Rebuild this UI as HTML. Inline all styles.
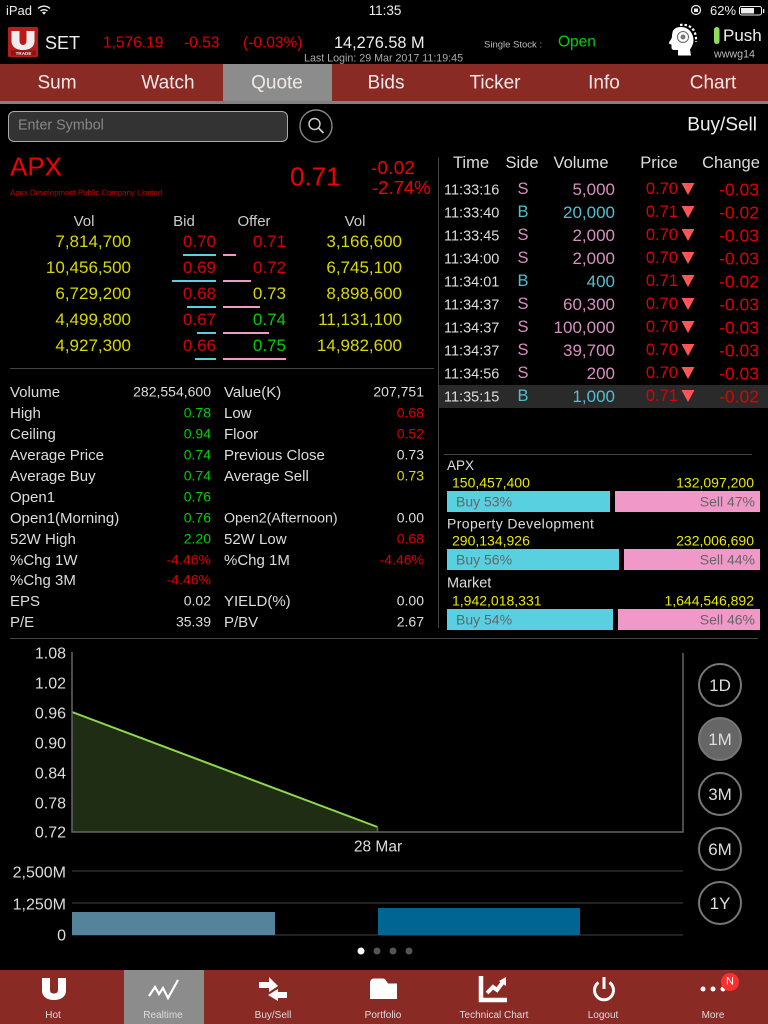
<!DOCTYPE html>
<html><head><meta charset="utf-8"><title>Quote</title>
<style>
html,body{margin:0;padding:0;background:#000}
#p{position:relative;width:768px;height:1024px;overflow:hidden;background:#000;font-family:"Liberation Sans",sans-serif;color:#ddd}
.t{position:absolute;transform:translateY(calc(-50% + 1px));white-space:nowrap;line-height:1.2}
.c{transform:translate(-50%,calc(-50% + 1px))}
.b{position:absolute}
.tab{font-size:19px;color:#f0e8e8}
.vh{font-size:15px;color:#ccc}
.q{font-size:17px}
.y{color:#d8d800}.r{color:#d80000}.g{color:#00d000}
.s{font-size:15px;color:#ddd}
.v{font-size:14px}
.w{color:#ddd}
.th{font-size:16.5px;color:#ddd}
.tm{font-size:14.5px;color:#ddd;left:444px}
.sd{font-size:16.5px;left:523px}
.vo{font-size:17px;right:153px}
.pr{font-size:16.5px;right:90px;color:#e00000}
.ch{font-size:17.5px;right:9px;color:#e00000}
.pk{color:#d890c0}.cy{color:#50c0d0}
.n{font-size:14px;color:#e8e800}
.l{font-size:14.5px;color:#ddd;left:447px}
.bs{font-size:14px;color:#666}
.ax{font-size:16px;color:#ddd;right:702px}
.rb{position:absolute;left:698px;width:40px;height:40px;border:2px solid #777;border-radius:50%;text-align:center;line-height:42px;font-size:17px;color:#ddd}
.f{font-size:10px;color:#ddd}
</style></head><body><div id="p">

<!-- status bar -->
<div class="t" style="left:6px;top:10px;font-size:13px;color:#eee">iPad</div>
<div class="t c" style="left:385px;top:10px;font-size:13.5px;color:#eee">11:35</div>
<div class="t" style="left:710px;top:10px;font-size:13px;color:#eee">62%</div>
<svg class="b" style="left:0;top:0" width="768" height="64" viewBox="0 0 768 64">
<g fill="none" stroke="#eee" stroke-width="1.4"><path d="M38 8.5a9 9 0 0 1 12 0"/><path d="M40.5 11a5.4 5.4 0 0 1 7 0"/></g><path d="M42 12.5a3 3 0 0 1 4 0l-2 2.2z" fill="#eee"/>
<circle cx="696" cy="10" r="4.5" fill="none" stroke="#eee" stroke-width="1.2"/><rect x="694" y="8.5" width="4" height="3.5" fill="#eee"/>
<rect x="739.5" y="6.5" width="22" height="8.5" rx="2" fill="none" stroke="#eee"/><rect x="741" y="8" width="13" height="5.5" fill="#eee"/><rect x="763" y="9" width="1.3" height="4" fill="#eee"/>
<!-- logo -->
<rect x="8" y="27" width="30" height="30" rx="1.5" fill="#b81d1d"/>
<path d="M11.500 31h8v9.500c0 3 1.500 4.500 3.500 4.500s3.500-1.500 3.500-4.500V31h8v10c0 6-5 9-11.500 9s-11.500-3-11.500-9z" fill="#eee"/>
<rect x="11" y="50.500" width="25" height="5" fill="#8c1414"/>
<text x="23.500" y="55" text-anchor="middle" font-family="Liberation Sans" font-size="4.600" font-weight="bold" fill="#eee">TRADE</text>
<!-- head -->
<path d="M681 27c-5 0-8 2-8.500 5.500-.5 2-.5 4-.7 5 0 1.500-2.800 4-2.800 5.500 0 1 1.500 1.500 2.500 1.500v3c0 1.500 1 2.500 3 2.500h3.500v5.500h13l-1-6c2-3 3.500-6 3.500-9 0-8-5.500-13.500-12.500-13.500z" fill="#fff"/>
<circle cx="683" cy="37" r="5.500" fill="none" stroke="#666" stroke-width="1"/><circle cx="683" cy="37" r="2.500" fill="#777"/>
<path d="M680 25c9-1.500 17 4 16 17" fill="none" stroke="#fff" stroke-width="2.200" stroke-dasharray="2.500 2"/>
<rect x="714" y="27" width="5.500" height="17" rx="2.700" fill="#90dc60"/>
</svg>

<div class="t" style="left:45px;top:43px;font-size:18px;color:#eee">SET</div>
<div class="t" style="left:103px;top:43px;font-size:15.5px;color:#e00000">1,576.19</div>
<div class="t" style="left:184px;top:43px;font-size:15.5px;color:#e00000">-0.53</div>
<div class="t" style="left:243px;top:43px;font-size:15.5px;color:#e00000">(-0.03%)</div>
<div class="t" style="left:334px;top:43px;font-size:16.3px;color:#eee">14,276.58 M</div>
<div class="t" style="left:304px;top:58px;font-size:10.7px;color:#aaa">Last Login: 29 Mar 2017 11:19:45</div>
<div class="t" style="left:484px;top:44px;font-size:9.5px;color:#bbb">Single Stock :</div>
<div class="t" style="left:558px;top:42px;font-size:15.5px;color:#00d000">Open</div>
<div class="t" style="left:723px;top:35px;font-size:17px;color:#eee">Push</div>
<div class="t" style="left:714px;top:54px;font-size:10.7px;color:#bbb">wwwg14</div>

<!-- tabs -->
<div class="b" style="left:0;top:64px;width:768px;height:37px;background:#8a2a25"></div>
<div class="b" style="left:223px;top:64px;width:109px;height:37px;background:#8c8c8c"></div>
<div class="b" style="left:0;top:101px;width:768px;height:3px;background:#808080"></div>
<div class="t c tab" style="left:57px;top:83px">Sum</div>
<div class="t c tab" style="left:168px;top:83px">Watch</div>
<div class="t c tab" style="left:277px;top:83px">Quote</div>
<div class="t c tab" style="left:386px;top:83px">Bids</div>
<div class="t c tab" style="left:495px;top:83px">Ticker</div>
<div class="t c tab" style="left:604px;top:83px">Info</div>
<div class="t c tab" style="left:713px;top:83px">Chart</div>

<!-- search -->
<div class="b" style="left:8px;top:111px;width:278px;height:29px;background:#333;border:1px solid #aaa;border-radius:6px"></div>
<div class="t" style="left:18px;top:125px;font-size:14.3px;color:#888">Enter Symbol</div>
<svg class="b" style="left:299px;top:109px" width="34" height="34"><circle cx="17" cy="17" r="16" fill="none" stroke="#888" stroke-width="1.4"/><circle cx="15.500" cy="15" r="5.500" fill="none" stroke="#ccc" stroke-width="1.5"/><path d="M19.500 19l5 5" stroke="#ccc" stroke-width="1.8"/></svg>
<div class="t" style="right:11px;top:125px;font-size:19px;color:#eee">Buy/Sell</div>

<!-- title -->
<div class="t" style="left:10px;top:166px;font-size:26px;color:#f00000">APX</div>
<div class="t" style="left:10px;top:192px;font-size:7.8px;color:#c00000">Apex Development Public Company Limited</div>
<div class="t" style="left:290px;top:176px;font-size:26px;color:#f00000">0.71</div>
<div class="t" style="left:371px;top:167px;font-size:18.5px;letter-spacing:.4px;color:#f00000">-0.02</div>
<div class="t" style="left:372px;top:187px;font-size:18.5px;color:#f00000">-2.74%</div>

<!-- bids -->
<div class="t c vh" style="left:84px;top:221px">Vol</div>
<div class="t c vh" style="left:184px;top:221px">Bid</div>
<div class="t c vh" style="left:254px;top:221px">Offer</div>
<div class="t c vh" style="left:355px;top:221px">Vol</div>

<div class="t q y" style="right:637px;top:241px">7,814,700</div><div class="t q r" style="right:552px;top:241px">0.70</div><div class="t q r" style="right:482px;top:241px">0.71</div><div class="t q y" style="right:366px;top:241px">3,166,600</div>
<div class="t q y" style="right:637px;top:267px">10,456,500</div><div class="t q r" style="right:552px;top:267px">0.69</div><div class="t q r" style="right:482px;top:267px">0.72</div><div class="t q y" style="right:366px;top:267px">6,745,100</div>
<div class="t q y" style="right:637px;top:293px">6,729,200</div><div class="t q r" style="right:552px;top:293px">0.68</div><div class="t q y" style="right:482px;top:293px">0.73</div><div class="t q y" style="right:366px;top:293px">8,898,600</div>
<div class="t q y" style="right:637px;top:319px">4,499,800</div><div class="t q r" style="right:552px;top:319px">0.67</div><div class="t q g" style="right:482px;top:319px">0.74</div><div class="t q y" style="right:366px;top:319px">11,131,100</div>
<div class="t q y" style="right:637px;top:345px">4,927,300</div><div class="t q r" style="right:552px;top:345px">0.66</div><div class="t q g" style="right:482px;top:345px">0.75</div><div class="t q y" style="right:366px;top:345px">14,982,600</div>

<div class="b" style="left:183px;top:254px;width:33px;height:2px;background:#5ad0e0"></div>
<div class="b" style="left:172px;top:280px;width:44px;height:2px;background:#5ad0e0"></div>
<div class="b" style="left:187px;top:306px;width:29px;height:2px;background:#5ad0e0"></div>
<div class="b" style="left:197px;top:332px;width:19px;height:2px;background:#5ad0e0"></div>
<div class="b" style="left:195px;top:358px;width:21px;height:2px;background:#5ad0e0"></div>
<div class="b" style="left:223px;top:254px;width:13px;height:2px;background:#f098c8"></div>
<div class="b" style="left:223px;top:280px;width:28px;height:2px;background:#f098c8"></div>
<div class="b" style="left:223px;top:306px;width:37px;height:2px;background:#f098c8"></div>
<div class="b" style="left:223px;top:332px;width:46px;height:2px;background:#f098c8"></div>
<div class="b" style="left:223px;top:358px;width:63px;height:2px;background:#f098c8"></div>

<div class="b" style="left:10px;top:368px;width:424px;height:1px;background:#444"></div>
<div class="b" style="left:438px;top:157px;width:1px;height:471px;background:#444"></div>

<!-- stats -->
<div class="t s" style="left:10px;top:392px">Volume</div><div class="t v w" style="right:557px;top:391px">282,554,600</div><div class="t s" style="left:224px;top:392px">Value(K)</div><div class="t v w" style="right:344px;top:391px">207,751</div>
<div class="t s" style="left:10px;top:413px">High</div><div class="t v g" style="right:557px;top:412px">0.78</div><div class="t s" style="left:224px;top:413px">Low</div><div class="t v r" style="right:344px;top:412px">0.68</div>
<div class="t s" style="left:10px;top:434px">Ceiling</div><div class="t v g" style="right:557px;top:433px">0.94</div><div class="t s" style="left:224px;top:434px">Floor</div><div class="t v r" style="right:344px;top:433px">0.52</div>
<div class="t s" style="left:10px;top:455px">Average Price</div><div class="t v g" style="right:557px;top:454px">0.74</div><div class="t s" style="left:224px;top:455px">Previous Close</div><div class="t v w" style="right:344px;top:454px">0.73</div>
<div class="t s" style="left:10px;top:476px">Average Buy</div><div class="t v g" style="right:557px;top:475px">0.74</div><div class="t s" style="left:224px;top:476px">Average Sell</div><div class="t v y" style="right:344px;top:475px">0.73</div>
<div class="t s" style="left:10px;top:497px">Open1</div><div class="t v g" style="right:557px;top:496px">0.76</div>
<div class="t s" style="left:10px;top:518px">Open1(Morning)</div><div class="t v g" style="right:557px;top:517px">0.76</div><div class="t s" style="left:224px;top:518px;font-size:14.2px">Open2(Afternoon)</div><div class="t v w" style="right:344px;top:517px">0.00</div>
<div class="t s" style="left:10px;top:539px">52W High</div><div class="t v g" style="right:557px;top:538px">2.20</div><div class="t s" style="left:224px;top:539px">52W Low</div><div class="t v r" style="right:344px;top:538px">0.68</div>
<div class="t s" style="left:10px;top:560px">%Chg 1W</div><div class="t v r" style="right:557px;top:559px">-4.46%</div><div class="t s" style="left:224px;top:560px">%Chg 1M</div><div class="t v r" style="right:344px;top:559px">-4.46%</div>
<div class="t s" style="left:10px;top:580px">%Chg 3M</div><div class="t v r" style="right:557px;top:579px">-4.46%</div>
<div class="t s" style="left:10px;top:601px">EPS</div><div class="t v w" style="right:557px;top:600px">0.02</div><div class="t s" style="left:224px;top:601px">YIELD(%)</div><div class="t v w" style="right:344px;top:600px">0.00</div>
<div class="t s" style="left:10px;top:622px">P/E</div><div class="t v w" style="right:557px;top:621px">35.39</div><div class="t s" style="left:224px;top:622px">P/BV</div><div class="t v w" style="right:344px;top:621px">2.67</div>

<div class="b" style="left:10px;top:638px;width:748px;height:1px;background:#444"></div>

<!-- ticker -->
<div class="t c th" style="left:471px;top:163px">Time</div>
<div class="t c th" style="left:522px;top:163px">Side</div>
<div class="t c th" style="left:581px;top:163px">Volume</div>
<div class="t c th" style="left:659px;top:163px">Price</div>
<div class="t c th" style="left:731px;top:163px">Change</div>
<div class="b" style="left:439px;top:385px;width:329px;height:23px;background:#2a2a2a"></div>

<div class="t tm" style="top:190px">11:33:16</div><div class="t c sd pk" style="top:189px">S</div><div class="t vo pk" style="top:189px">5,000</div><div class="t pr" style="top:189px">0.70</div><div class="t ch" style="top:189px">-0.03</div>
<div class="t tm" style="top:213px">11:33:40</div><div class="t c sd cy" style="top:212px">B</div><div class="t vo cy" style="top:212px">20,000</div><div class="t pr" style="top:212px">0.71</div><div class="t ch" style="top:212px">-0.02</div>
<div class="t tm" style="top:236px">11:33:45</div><div class="t c sd pk" style="top:235px">S</div><div class="t vo pk" style="top:235px">2,000</div><div class="t pr" style="top:235px">0.70</div><div class="t ch" style="top:235px">-0.03</div>
<div class="t tm" style="top:259px">11:34:00</div><div class="t c sd pk" style="top:258px">S</div><div class="t vo pk" style="top:258px">2,000</div><div class="t pr" style="top:258px">0.70</div><div class="t ch" style="top:258px">-0.03</div>
<div class="t tm" style="top:282px">11:34:01</div><div class="t c sd cy" style="top:281px">B</div><div class="t vo cy" style="top:281px">400</div><div class="t pr" style="top:281px">0.71</div><div class="t ch" style="top:281px">-0.02</div>
<div class="t tm" style="top:305px">11:34:37</div><div class="t c sd pk" style="top:304px">S</div><div class="t vo pk" style="top:304px">60,300</div><div class="t pr" style="top:304px">0.70</div><div class="t ch" style="top:304px">-0.03</div>
<div class="t tm" style="top:328px">11:34:37</div><div class="t c sd pk" style="top:327px">S</div><div class="t vo pk" style="top:327px">100,000</div><div class="t pr" style="top:327px">0.70</div><div class="t ch" style="top:327px">-0.03</div>
<div class="t tm" style="top:351px">11:34:37</div><div class="t c sd pk" style="top:350px">S</div><div class="t vo pk" style="top:350px">39,700</div><div class="t pr" style="top:350px">0.70</div><div class="t ch" style="top:350px">-0.03</div>
<div class="t tm" style="top:374px">11:34:56</div><div class="t c sd pk" style="top:373px">S</div><div class="t vo pk" style="top:373px">200</div><div class="t pr" style="top:373px">0.70</div><div class="t ch" style="top:373px">-0.03</div>
<div class="t tm" style="top:397px">11:35:15</div><div class="t c sd cy" style="top:396px">B</div><div class="t vo cy" style="top:396px">1,000</div><div class="t pr" style="top:396px">0.71</div><div class="t ch" style="top:396px">-0.02</div>

<svg class="b" style="left:680px;top:180px" width="16" height="225" fill="#ff5555">
<path d="M1.500 3h13l-6.500 12z"/><path d="M1.500 26h13l-6.500 12z"/><path d="M1.500 49h13l-6.500 12z"/><path d="M1.500 72h13l-6.500 12z"/><path d="M1.500 95h13l-6.500 12z"/><path d="M1.500 118h13l-6.500 12z"/><path d="M1.500 141h13l-6.500 12z"/><path d="M1.500 164h13l-6.500 12z"/><path d="M1.500 187h13l-6.500 12z"/><path d="M1.500 210h13l-6.500 12z"/>
</svg>

<!-- buy/sell -->
<div class="b" style="left:444px;top:454px;width:308px;height:1px;background:#444"></div>

<div class="t l" style="top:465px;font-size:13.5px">APX</div>
<div class="t n" style="left:452px;top:482px">150,457,400</div><div class="t n" style="right:14px;top:482px">132,097,200</div>
<div class="b" style="left:447px;top:491px;width:163px;height:21px;background:#58d0e0"></div><div class="b" style="left:615px;top:491px;width:145px;height:21px;background:#f098c8"></div>
<div class="t bs" style="left:456px;top:501px">Buy 53%</div><div class="t bs" style="right:13px;top:501px">Sell 47%</div>

<div class="t l" style="top:523px;font-size:14px;letter-spacing:.4px">Property Development</div>
<div class="t n" style="left:452px;top:540px">290,134,926</div><div class="t n" style="right:14px;top:540px">232,006,690</div>
<div class="b" style="left:447px;top:549px;width:172px;height:21px;background:#58d0e0"></div><div class="b" style="left:624px;top:549px;width:136px;height:21px;background:#f098c8"></div>
<div class="t bs" style="left:456px;top:559px">Buy 56%</div><div class="t bs" style="right:13px;top:559px">Sell 44%</div>

<div class="t l" style="top:583px">Market</div>
<div class="t n" style="left:452px;top:600px">1,942,018,331</div><div class="t n" style="right:14px;top:600px">1,644,546,892</div>
<div class="b" style="left:447px;top:609px;width:166px;height:21px;background:#58d0e0"></div><div class="b" style="left:618px;top:609px;width:142px;height:21px;background:#f098c8"></div>
<div class="t bs" style="left:456px;top:619px">Buy 54%</div><div class="t bs" style="right:13px;top:619px">Sell 46%</div>

<!-- chart -->
<svg class="b" style="left:0;top:640px" width="768" height="330" viewBox="0 640 768 330">
<path d="M72 712L377.500 827V832H72z" fill="#1f2d14"/>
<path d="M72 712L377.500 827" stroke="#8fd94e" stroke-width="2" fill="none"/>
<path d="M377.500 827V832" stroke="#666" stroke-width="1.5"/>
<path d="M72 652V832H683V653" fill="none" stroke="#666" stroke-width="1.5"/>
<path d="M72 871H683M72 903H683M72 935H683" stroke="#2a2a2a" stroke-width="1.5"/>
<rect x="72" y="912" width="203" height="23" fill="#55839b"/>
<rect x="378" y="908" width="202" height="27" fill="#006593"/>
<circle cx="361" cy="951" r="3.500" fill="#fff"/><circle cx="377" cy="951" r="3.500" fill="#555"/><circle cx="393" cy="951" r="3.500" fill="#555"/><circle cx="409" cy="951" r="3.500" fill="#555"/>
</svg>
<div class="t ax" style="top:653px">1.08</div>
<div class="t ax" style="top:683px">1.02</div>
<div class="t ax" style="top:713px">0.96</div>
<div class="t ax" style="top:743px">0.90</div>
<div class="t ax" style="top:773px">0.84</div>
<div class="t ax" style="top:803px">0.78</div>
<div class="t ax" style="top:832px">0.72</div>
<div class="t c" style="left:378px;top:847px;font-size:15.5px;color:#ddd">28 Mar</div>
<div class="t ax" style="top:872px">2,500M</div>
<div class="t ax" style="top:904px">1,250M</div>
<div class="t ax" style="top:935px">0</div>

<div class="rb" style="top:663px">1D</div>
<div class="rb" style="top:717px;background:#666">1M</div>
<div class="rb" style="top:772px">3M</div>
<div class="rb" style="top:827px">6M</div>
<div class="rb" style="top:881px">1Y</div>

<!-- footer -->
<div class="b" style="left:0;top:970px;width:768px;height:54px;background:#8a2a25"></div>
<div class="b" style="left:124px;top:970px;width:80px;height:54px;background:#8c8c8c"></div>
<svg class="b" style="left:0;top:970px" width="768" height="54" viewBox="0 970 768 54">
<path d="M42 978h8v12c0 2.500 1.500 3.500 4 3.500s4-1 4-3.500v-12h8v12.500c0 6-5 9.500-12 9.500s-12-3.500-12-9.500z" fill="#fff"/>
<path d="M149 996l6-9 4 7 4-6 5 10 10-18" fill="none" stroke="#fff" stroke-width="2.200"/>
<path d="M259 982h10v-5l9 9-9 6v-4h-10z" fill="#fff"/>
<path d="M287 992h-9v-3l-10 6 10 6v-3h9z" fill="#fff"/>
<path d="M370 999V983c0-3 2-4.500 4-4.500h9c2 0 3 2 5 5h9v15.500z" fill="#fff"/>
<path d="M481 976v24h26" fill="none" stroke="#fff" stroke-width="4.500"/>
<path d="M487 993l6-6 4 3 6-8" fill="none" stroke="#fff" stroke-width="4"/>
<path d="M499 981l7-4v9z" fill="#fff"/>
<path d="M598.500 982.500a9.500 9.500 0 1 0 11 0" fill="none" stroke="#fff" stroke-width="3"/><path d="M604 977v12" stroke="#fff" stroke-width="3"/>
<circle cx="703" cy="989" r="2.500" fill="#fff"/><circle cx="713" cy="989" r="2.500" fill="#fff"/><circle cx="723" cy="989" r="2.500" fill="#fff"/>
<circle cx="730" cy="982" r="9" fill="#f93030"/>
</svg>
<div class="t c" style="left:730px;top:981px;font-size:11px;color:#fff">N</div>
<div class="t c f" style="left:53px;top:1015px">Hot</div>
<div class="t c f" style="left:163px;top:1015px">Realtime</div>
<div class="t c f" style="left:273px;top:1015px">Buy/Sell</div>
<div class="t c f" style="left:383px;top:1015px">Portfolio</div>
<div class="t c f" style="left:494px;top:1015px">Technical Chart</div>
<div class="t c f" style="left:603px;top:1015px">Logout</div>
<div class="t c f" style="left:713px;top:1015px">More</div>

</div></body></html>
